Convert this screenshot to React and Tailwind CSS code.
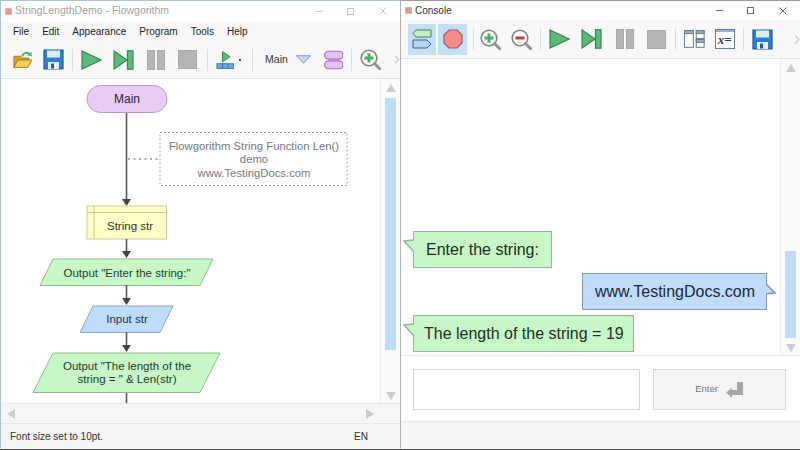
import React from 'react';

const PlayIcon = () => (
  <svg width="21" height="20" viewBox="0 0 21 20"><path d="M1 1 L20 10 L1 19 Z" fill="#5fb87a" stroke="#2f8a50" strokeWidth="1.2" /></svg>
);

const StepIcon = () => (
  <svg width="21" height="20" viewBox="0 0 21 20">
    <path d="M1 1 L14 10 L1 19 Z" fill="#5fb87a" stroke="#2f8a50" strokeWidth="1.2" />
    <rect x="14.5" y="0.8" width="5.5" height="18.4" fill="#5fb87a" stroke="#2f8a50" strokeWidth="1.2" />
  </svg>
);

const PauseIcon = () => (
  <svg width="18" height="20" viewBox="0 0 18 20">
    <rect x="0.5" y="0.5" width="7" height="19" fill="#b5b5b5" stroke="#a8a8a8" />
    <rect x="10.5" y="0.5" width="7" height="19" fill="#b5b5b5" stroke="#a8a8a8" />
  </svg>
);

const StopIcon = () => (
  <svg width="19" height="19" viewBox="0 0 19 19"><rect x="0.5" y="0.5" width="18" height="18" fill="#b5b5b5" stroke="#a8a8a8" /></svg>
);

const SaveIcon = () => (
  <svg width="21" height="21" viewBox="0 0 21 21">
    <path d="M1 1 H20 V20 H1 Z" fill="#2f7fd0" stroke="#1c5aa0" strokeWidth="1.2" />
    <rect x="4" y="1.5" width="13" height="7" fill="#dcecfa" />
    <rect x="5" y="13" width="11" height="7" fill="#e8eef4" />
    <rect x="8" y="14.5" width="3" height="5" fill="#2b5c90" />
  </svg>
);

const ZoomIcon = ({ minus }) => (
  <svg width="21" height="21" viewBox="0 0 21 21">
    <circle cx="9" cy="9" r="7.8" fill="#fbfbf6" stroke="#7d8580" strokeWidth="1.6" />
    <path d="M14.5 14.5 L20 20" stroke="#8f9490" strokeWidth="3" strokeLinecap="round" />
    {minus ? (
      <rect x="4.5" y="7.5" width="9" height="3" fill="#c8384a" />
    ) : (
      <path d="M4.5 9 H13.5 M9 4.5 V13.5" stroke="#45b06a" strokeWidth="3" />
    )}
  </svg>
);

const Divider = ({ ml }) => <div className={`w-px h-[22px] bg-[#dcdcdc] ${ml}`} />;

const Chevron = ({ className }) => (
  <svg width="6" height="9" viewBox="0 0 6 9" className={className}>
    <path d="M1 0.5 L5 4.5 L1 8.5" fill="none" stroke="#cfcfcf" strokeWidth="1.4" />
  </svg>
);

const WindowButtons = ({ faded }) => (
  <div className={`flex items-center ml-auto ${faded ? 'opacity-30' : 'opacity-80'}`}>
    <div className="w-[7px] h-px bg-[#444]" />
    <div className="w-[7px] h-[7px] border border-[#444] ml-[24px]" />
    <svg width="8" height="8" viewBox="0 0 8 8" className="ml-[25px]">
      <path d="M0.5 0.5 L7.5 7.5 M7.5 0.5 L0.5 7.5" stroke="#444" strokeWidth="1" />
    </svg>
  </div>
);

const AppIcon = () => (
  <div className="w-[7px] h-[7px] bg-[#e59a86] border border-[#c9b8b0] rounded-[1px] shrink-0" />
);

const Flowchart = () => (
  <svg width="380" height="325" viewBox="1 1 380 325" fontFamily="Liberation Sans, Arial, sans-serif" fontSize="11.5" textAnchor="middle">
    <path d="M126.5 34 V124" stroke="#555" strokeWidth="1.6" />
    <path d="M122 121 H131 L126.5 128 Z" fill="#444" />
    <path d="M128 81 H159" stroke="#555" strokeWidth="1.2" strokeDasharray="2 3.5" />
    <rect x="87" y="7.5" width="80" height="27" rx="13.5" fill="#eacdf6" stroke="#b79cc2" />
    <text x="127" y="25" fill="#2c2430" fontSize="12">Main</text>

    <rect x="160" y="54.5" width="187" height="53" fill="#fff" stroke="#999" strokeDasharray="2 2" />
    <text x="254" y="72" fill="#77777c" fontSize="11.3">Flowgorithm String Function Len()</text>
    <text x="254" y="85" fill="#77777c" fontSize="11.3">demo</text>
    <text x="254" y="99" fill="#77777c" fontSize="11.3">www.TestingDocs.com</text>

    <rect x="87" y="128" width="79.5" height="33" fill="#ffffc8" stroke="#c9c98e" />
    <path d="M87 134.5 H166.5 M94 128 V161" stroke="#c9c98e" />
    <text x="130" y="152" fill="#33332a">String str</text>

    <path d="M126.5 161 V176" stroke="#555" strokeWidth="1.6" />
    <path d="M122 173 H131 L126.5 180 Z" fill="#444" />
    <path d="M53 181 H213 L200 207.5 H40 Z" fill="#c8f8c8" stroke="#8fbb8f" />
    <text x="127" y="199" fill="#23402a">Output "Enter the string:"</text>

    <path d="M126.5 207 V224" stroke="#555" strokeWidth="1.6" />
    <path d="M122 220 H131 L126.5 227 Z" fill="#444" />
    <path d="M93 228 H173 L160 254.5 H80 Z" fill="#c0dcfa" stroke="#8aa8c8" />
    <text x="127" y="245" fill="#1f3048">Input str</text>

    <path d="M126.5 254 V270" stroke="#555" strokeWidth="1.6" />
    <path d="M122 267 H131 L126.5 274 Z" fill="#444" />
    <path d="M53 275 H220 L200 314.5 H33 Z" fill="#c8f8c8" stroke="#8fbb8f" />
    <text x="127" y="292" fill="#23402a">Output "The length of the</text>
    <text x="127" y="305" fill="#23402a">string = " &amp; Len(str)</text>

    <path d="M126.5 315 V326" stroke="#555" strokeWidth="1.6" />
  </svg>
);

const Bubble = ({ color, side, className, children }) => {
  const green = color === 'green';
  return (
    <div className={`relative flex items-center h-[37px] border-[1.5px] text-[16px] ${green ? 'bg-[#c8f8c8] border-[#8fb79a] text-[#1c2f20]' : 'bg-[#c0dcfa] border-[#7f9ab8] text-[#1a2838]'} ${className}`}>
      {children}
      {side === 'left' ? (
        <svg width="12" height="14" viewBox="0 0 12 14" className="absolute left-[-11px] top-[7px]">
          <path d="M11 1 L1 2 L11 13" fill="#c8f8c8" stroke="#8fb79a" strokeWidth="1.5" />
        </svg>
      ) : (
        <svg width="12" height="14" viewBox="0 0 12 14" className="absolute right-[-11px] top-[9px]">
          <path d="M1 1 L10 10 L1 11" fill="#c0dcfa" stroke="#7f9ab8" strokeWidth="1.5" />
        </svg>
      )}
    </div>
  );
};

const VScroll = ({ thumb }) => (
  <div className="w-5 shrink-0 flex flex-col items-center bg-[#fafafa] border-l border-[#ededed]">
    <svg width="10" height="8" viewBox="0 0 10 8" className="mt-[5px] shrink-0"><path d="M5 0 L10 8 H0 Z" fill="#cdcdcd" /></svg>
    {thumb}
    <svg width="10" height="8" viewBox="0 0 10 8" className="mt-auto mb-[3px] shrink-0"><path d="M5 8 L10 0 H0 Z" fill="#cdcdcd" /></svg>
  </div>
);

export default function App() {
  return (
    <div className="w-[800px] h-[450px] flex bg-[#f3f3f3] overflow-hidden font-['Liberation_Sans',Arial,sans-serif]">
      {/* flowchart window */}
      <div className="w-[400px] h-[450px] flex flex-col bg-white border-l border-t border-b border-l-[#a8c4cc] border-t-[#a8c4cc] border-b-[#555]">
        <div className="h-[20px] shrink-0 flex items-center pl-[4px] pr-[13px] bg-white">
          <AppIcon />
          <span className="ml-[3px] text-[10.5px] text-[#a0a0a0]">StringLengthDemo - Flowgorithm</span>
          <WindowButtons faded />
        </div>
        <div className="h-[20px] shrink-0 flex items-center pl-[12px] gap-[13px] text-[10px] text-[#222] bg-[#f8f8f8]">
          <span>File</span>
          <span>Edit</span>
          <span>Appearance</span>
          <span>Program</span>
          <span>Tools</span>
          <span>Help</span>
        </div>
        <div className="h-[38px] shrink-0 flex items-center pl-[12px] bg-[#f8f8f8] border-b border-[#e4e4e4]">
          <svg width="21" height="21" viewBox="0 0 21 21">
            <path d="M1 19 V7 H8 L10 9 H17 V11 H5 Z" fill="#d9a52e" stroke="#a57a18" />
            <path d="M1 19 L5 11 H20 L16 19 Z" fill="#f4cf5c" stroke="#a57a18" />
            <path d="M10 7 C11 3 15 2 18 5" fill="none" stroke="#4caf6a" strokeWidth="2" />
            <path d="M15 6 L20 7 L19.5 2 Z" fill="#4caf6a" />
          </svg>
          <div className="ml-[10px]"><SaveIcon /></div>
          <Divider ml="ml-[8px]" />
          <div className="ml-[8px]"><PlayIcon /></div>
          <div className="ml-[11px]"><StepIcon /></div>
          <div className="ml-[13px]"><PauseIcon /></div>
          <div className="ml-[13px]"><StopIcon /></div>
          <Divider ml="ml-[10px]" />
          <svg width="20" height="20" viewBox="0 0 20 20" className="ml-[8px]">
            <path d="M7 1 L15 6.5 L7 12 Z" fill="#5fb87a" stroke="#2f8a50" />
            <rect x="1" y="14" width="18" height="5" fill="#6ea4de" stroke="#3d73ad" />
            <path d="M7 14 V19 M13 14 V19" stroke="#3d73ad" />
          </svg>
          <div className="w-[2px] h-[2px] bg-[#555] ml-[5px]" />
          <Divider ml="ml-[11px]" />
          <span className="ml-[12px] text-[10.5px] text-[#333]">Main</span>
          <svg width="16" height="9" viewBox="0 0 16 9" className="ml-[8px]">
            <path d="M0.5 0.5 H15.5 L8 8.5 Z" fill="#c0dcfa" stroke="#7a8ea8" />
          </svg>
          <svg width="21" height="20" viewBox="0 0 21 20" className="ml-[13px]">
            <rect x="0.7" y="0.7" width="19.6" height="8.3" rx="4" fill="#e6c2f2" stroke="#9c6fb0" strokeWidth="1.2" />
            <rect x="0.7" y="11" width="19.6" height="8.3" rx="4" fill="#e6c2f2" stroke="#9c6fb0" strokeWidth="1.2" />
          </svg>
          <Divider ml="ml-[8px]" />
          <div className="ml-[8px]"><ZoomIcon /></div>
          <Chevron className="ml-[13px]" />
        </div>
        <div className="flex-1 flex min-h-0">
          <div className="flex-1 overflow-hidden bg-white"><Flowchart /></div>
          <VScroll thumb={<div className="w-[11px] h-[252px] mt-[6px] bg-[#bcdcf8]" />} />
        </div>
        <div className="h-[20px] shrink-0 flex items-center bg-[#f6f6f6] border-t border-[#e6e6e6]">
          <svg width="8" height="10" viewBox="0 0 8 10" className="ml-[6px]"><path d="M0 5 L8 0 V10 Z" fill="#cdcdcd" /></svg>
          <svg width="8" height="10" viewBox="0 0 8 10" className="ml-[351px]"><path d="M8 5 L0 0 V10 Z" fill="#cdcdcd" /></svg>
        </div>
        <div className="flex-1 max-h-[26px] min-h-[26px] shrink-0 flex items-center pl-[9px] pr-[32px] justify-between text-[10px] text-[#333] bg-[#f4f4f4] border-t border-[#e6e6e6]">
          <span>Font size set to 10pt.</span>
          <span>EN</span>
        </div>
      </div>

      {/* console window */}
      <div className="w-[400px] h-[450px] flex flex-col bg-white border-l border-t border-b border-l-[#b0b0b0] border-t-[#9a9a9a] border-b-[#555]">
        <div className="h-[19px] shrink-0 flex items-center pl-[4px] pr-[13px] bg-white">
          <AppIcon />
          <span className="ml-[3px] text-[10px] text-[#333]">Console</span>
          <WindowButtons />
        </div>
        <div className="h-[39px] shrink-0 flex items-center pl-[7px] bg-[#f8f8f8] border-b border-[#e4e4e4]">
          <div className="w-[29px] h-[31px] flex items-center justify-center bg-[#c4dff6]">
            <svg width="20" height="20" viewBox="0 0 20 20">
              <path d="M4 1 H19 V8 H4 L1 4.5 Z" fill="#c8f0c8" stroke="#4a7a5a" />
              <path d="M1 11 H15 L19 15 L15 19 H1 Z" fill="#b8d4f4" stroke="#3d5f8a" />
            </svg>
          </div>
          <div className="w-[29px] h-[31px] ml-[2px] flex items-center justify-center bg-[#c4dff6]">
            <svg width="20" height="20" viewBox="0 0 20 20">
              <path d="M6 1 H14 L19 6 V14 L14 19 H6 L1 14 V6 Z" fill="#f88c8c" stroke="#9a5a60" strokeWidth="1.2" />
            </svg>
          </div>
          <Divider ml="ml-[6px]" />
          <div className="ml-[6px]"><ZoomIcon /></div>
          <div className="ml-[10px]"><ZoomIcon minus /></div>
          <Divider ml="ml-[8px]" />
          <div className="ml-[8px]"><PlayIcon /></div>
          <div className="ml-[11px]"><StepIcon /></div>
          <div className="ml-[14px]"><PauseIcon /></div>
          <div className="ml-[13px]"><StopIcon /></div>
          <Divider ml="ml-[9px]" />
          <svg width="21" height="18" viewBox="0 0 21 18" className="ml-[8px]">
            <rect x="0.5" y="0.5" width="9" height="17" fill="#fff" stroke="#6a7a88" />
            <rect x="0.5" y="0.5" width="9" height="3" fill="#8fb4dc" stroke="#6a7a88" />
            <rect x="12.5" y="0.5" width="8" height="8" fill="#fff" stroke="#6a7a88" />
            <rect x="12.5" y="0.5" width="8" height="3" fill="#8fb4dc" stroke="#6a7a88" />
            <rect x="12.5" y="9.5" width="8" height="8" fill="#fff" stroke="#6a7a88" />
            <rect x="12.5" y="9.5" width="8" height="3" fill="#8fb4dc" stroke="#6a7a88" />
          </svg>
          <div className="ml-[10px] w-[21px] h-[20px] border border-[#6a7a88] bg-white flex flex-col">
            <div className="h-[2px] bg-[#8fb4dc]" />
            <span className="text-[13px] leading-[16px] font-bold italic text-[#2a3a5a] text-center font-['Liberation_Serif',serif]">x=</span>
          </div>
          <Divider ml="ml-[8px]" />
          <div className="ml-[8px]"><SaveIcon /></div>
          <Chevron className="ml-[21px]" />
        </div>
        <div className="h-[297px] shrink-0 flex border-b border-[#e6e6e6]">
          <div className="flex-1 flex flex-col justify-end pb-[3px] pl-[12px] pr-[4px] bg-white">
            <Bubble color="green" side="left" className="w-[139px] pl-[12px]">Enter the string:</Bubble>
            <Bubble color="blue" side="right" className="w-[185px] mt-[5px] ml-[169px] pl-[12px] text-[15.8px]">www.TestingDocs.com</Bubble>
            <Bubble color="green" side="left" className="w-[221px] mt-[5px] pl-[10px]">The length of the string = 19</Bubble>
          </div>
          <VScroll thumb={<div className="w-[11px] h-[87px] mt-[179px] bg-[#bcdcf8]" />} />
        </div>
        <div className="h-[66px] shrink-0 flex items-start pt-[13px] pl-[12px] bg-white border-b border-[#e6e6e6]">
          <div className="w-[227px] h-[41px] bg-white border border-[#d4d4d4]" />
          <div className="w-[133px] h-[41px] ml-[13px] flex items-center justify-center bg-[#f4f4f4] border border-[#d8d8d8]">
            <span className="text-[9.5px] text-[#777]">Enter</span>
            <svg width="19" height="18" viewBox="0 0 19 18" className="ml-[7px]">
              <path d="M12 1 H18 V14 H7 V17 L1 11.5 L7 7 V9 H12 Z" fill="#a6a6a6" />
            </svg>
          </div>
        </div>
        <div className="flex-1 bg-[#f4f4f4]" />
      </div>
    </div>
  );
}
